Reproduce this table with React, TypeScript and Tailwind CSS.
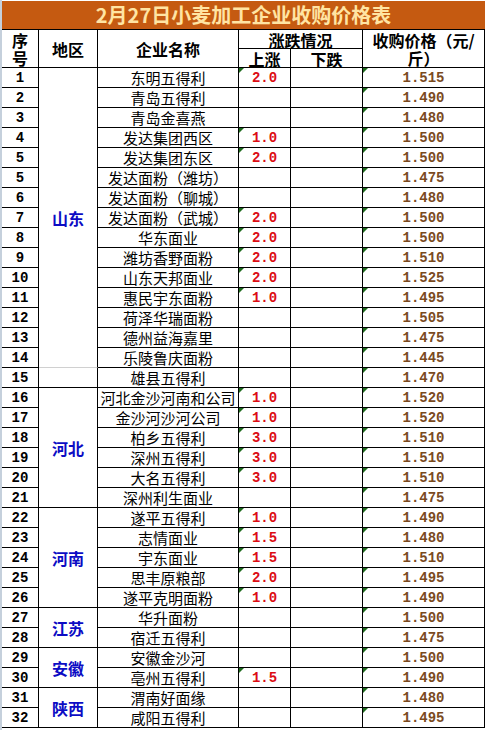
type Row = [string, string, string, string, string]

const rows: Row[] = [
  ['1', '东明五得利', '2.0', '', '1.515'],
  ['2', '青岛五得利', '', '', '1.490'],
  ['3', '青岛金喜燕', '', '', '1.480'],
  ['4', '发达集团西区', '1.0', '', '1.500'],
  ['5', '发达集团东区', '2.0', '', '1.500'],
  ['5', '发达面粉（潍坊）', '', '', '1.475'],
  ['6', '发达面粉（聊城）', '', '', '1.480'],
  ['7', '发达面粉（武城）', '2.0', '', '1.500'],
  ['8', '华东面业', '2.0', '', '1.500'],
  ['9', '潍坊香野面粉', '2.0', '', '1.510'],
  ['10', '山东天邦面业', '2.0', '', '1.525'],
  ['11', '惠民宇东面粉', '1.0', '', '1.495'],
  ['12', '荷泽华瑞面粉', '', '', '1.505'],
  ['13', '德州益海嘉里', '', '', '1.475'],
  ['14', '乐陵鲁庆面粉', '', '', '1.445'],
  ['15', '雄县五得利', '', '', '1.470'],
  ['16', '河北金沙河南和公司', '1.0', '', '1.520'],
  ['17', '金沙河沙河公司', '1.0', '', '1.520'],
  ['18', '柏乡五得利', '3.0', '', '1.510'],
  ['19', '深州五得利', '3.0', '', '1.510'],
  ['20', '大名五得利', '3.0', '', '1.510'],
  ['21', '深州利生面业', '', '', '1.475'],
  ['22', '遂平五得利', '1.0', '', '1.490'],
  ['23', '志情面业', '1.5', '', '1.480'],
  ['24', '宇东面业', '1.5', '', '1.510'],
  ['25', '思丰原粮部', '2.0', '', '1.495'],
  ['26', '遂平克明面粉', '1.0', '', '1.490'],
  ['27', '华升面粉', '', '', '1.500'],
  ['28', '宿迁五得利', '', '', '1.475'],
  ['29', '安徽金沙河', '', '', '1.500'],
  ['30', '亳州五得利', '1.5', '', '1.490'],
  ['31', '渭南好面缘', '', '', '1.480'],
  ['32', '咸阳五得利', '', '', '1.495'],
]

// region cells: start row index -> merged cell
const regions: Record<number, { name: string; span: string; bottom: string }> = {
  0: { name: '山东', span: 'row-span-15', bottom: 'border-b-[#d0d0d0]' },
  15: { name: '', span: 'row-span-1', bottom: 'border-b-black' },
  16: { name: '河北', span: 'row-span-6', bottom: 'border-b-black' },
  22: { name: '河南', span: 'row-span-5', bottom: 'border-b-black' },
  27: { name: '江苏', span: 'row-span-2', bottom: 'border-b-black' },
  29: { name: '安徽', span: 'row-span-2', bottom: 'border-b-black' },
  31: { name: '陕西', span: 'row-span-2', bottom: 'border-b-black' },
}

const cell = 'border-r border-b border-black flex items-center justify-center'
const mono = "font-['Liberation_Mono',monospace] font-bold text-[14px] leading-none"
const head = 'text-[16px] font-bold leading-[18px]'

function Flag() {
  return (
    <span className="absolute top-0 left-0 w-0 h-0 border-t-[5px] border-r-[5px] border-t-[#1d6b1d] border-r-transparent" />
  )
}

export default function App() {
  return (
    <div className="w-[487px] h-[730px] bg-white flex font-['Noto_Sans_CJK_SC',sans-serif] text-black overflow-hidden">
      <div className="w-[2px] shrink-0 bg-[#c5d0dc]" />
      <div className="pt-px">
        <div className="grid grid-cols-[37px_59px_141px_52px_72px_122px] grid-rows-[29px_19px_19px_repeat(33,20px)]">
          {/* Title */}
          <div className="col-span-6 border-b border-black bg-[#c55a11] flex items-center justify-center text-[20px] font-bold text-[#ffe4a3] leading-none">
            2月27日小麦加工企业收购价格表
          </div>

          {/* Header */}
          <div className={`${cell} row-span-2 flex-col ${head}`}>
            <span>序</span>
            <span>号</span>
          </div>
          <div className={`${cell} row-span-2 ${head}`}>地区</div>
          <div className={`${cell} row-span-2 ${head}`}>企业名称</div>
          <div className={`${cell} col-span-2 ${head} pt-px`}>涨跌情况</div>
          <div className={`${cell} row-span-2 flex-col ${head}`}>
            <span>收购价格（元/</span>
            <span>斤）</span>
          </div>
          <div className={`${cell} ${head} pt-px`}>上涨</div>
          <div className={`${cell} ${head} pt-px`}>下跌</div>

          {/* Body */}
          {rows.map((r, i) => {
            const reg = regions[i]
            return [
              <div key={`n${i}`} className={`${cell} ${mono}`}>{r[0]}</div>,
              reg ? (
                <div
                  key={`r${i}`}
                  className={`border-r border-b border-r-black ${reg.bottom} ${reg.span} flex items-center justify-center text-[16px] font-bold text-[#0c0cc4] leading-none`}
                >
                  {reg.name}
                </div>
              ) : null,
              <div key={`c${i}`} className={`${cell} text-[15px] leading-none whitespace-nowrap`}>{r[1]}</div>,
              <div key={`u${i}`} className={`${cell} relative ${mono} text-[#dc0c14]`}>
                {r[2] && <Flag />}
                {r[2]}
              </div>,
              <div key={`d${i}`} className={`${cell} ${mono}`}>{r[3]}</div>,
              <div key={`p${i}`} className={`${cell} relative ${mono} text-[#7a4a1e]`}>
                <Flag />
                {r[4]}
              </div>,
            ]
          })}
        </div>
      </div>
    </div>
  )
}
